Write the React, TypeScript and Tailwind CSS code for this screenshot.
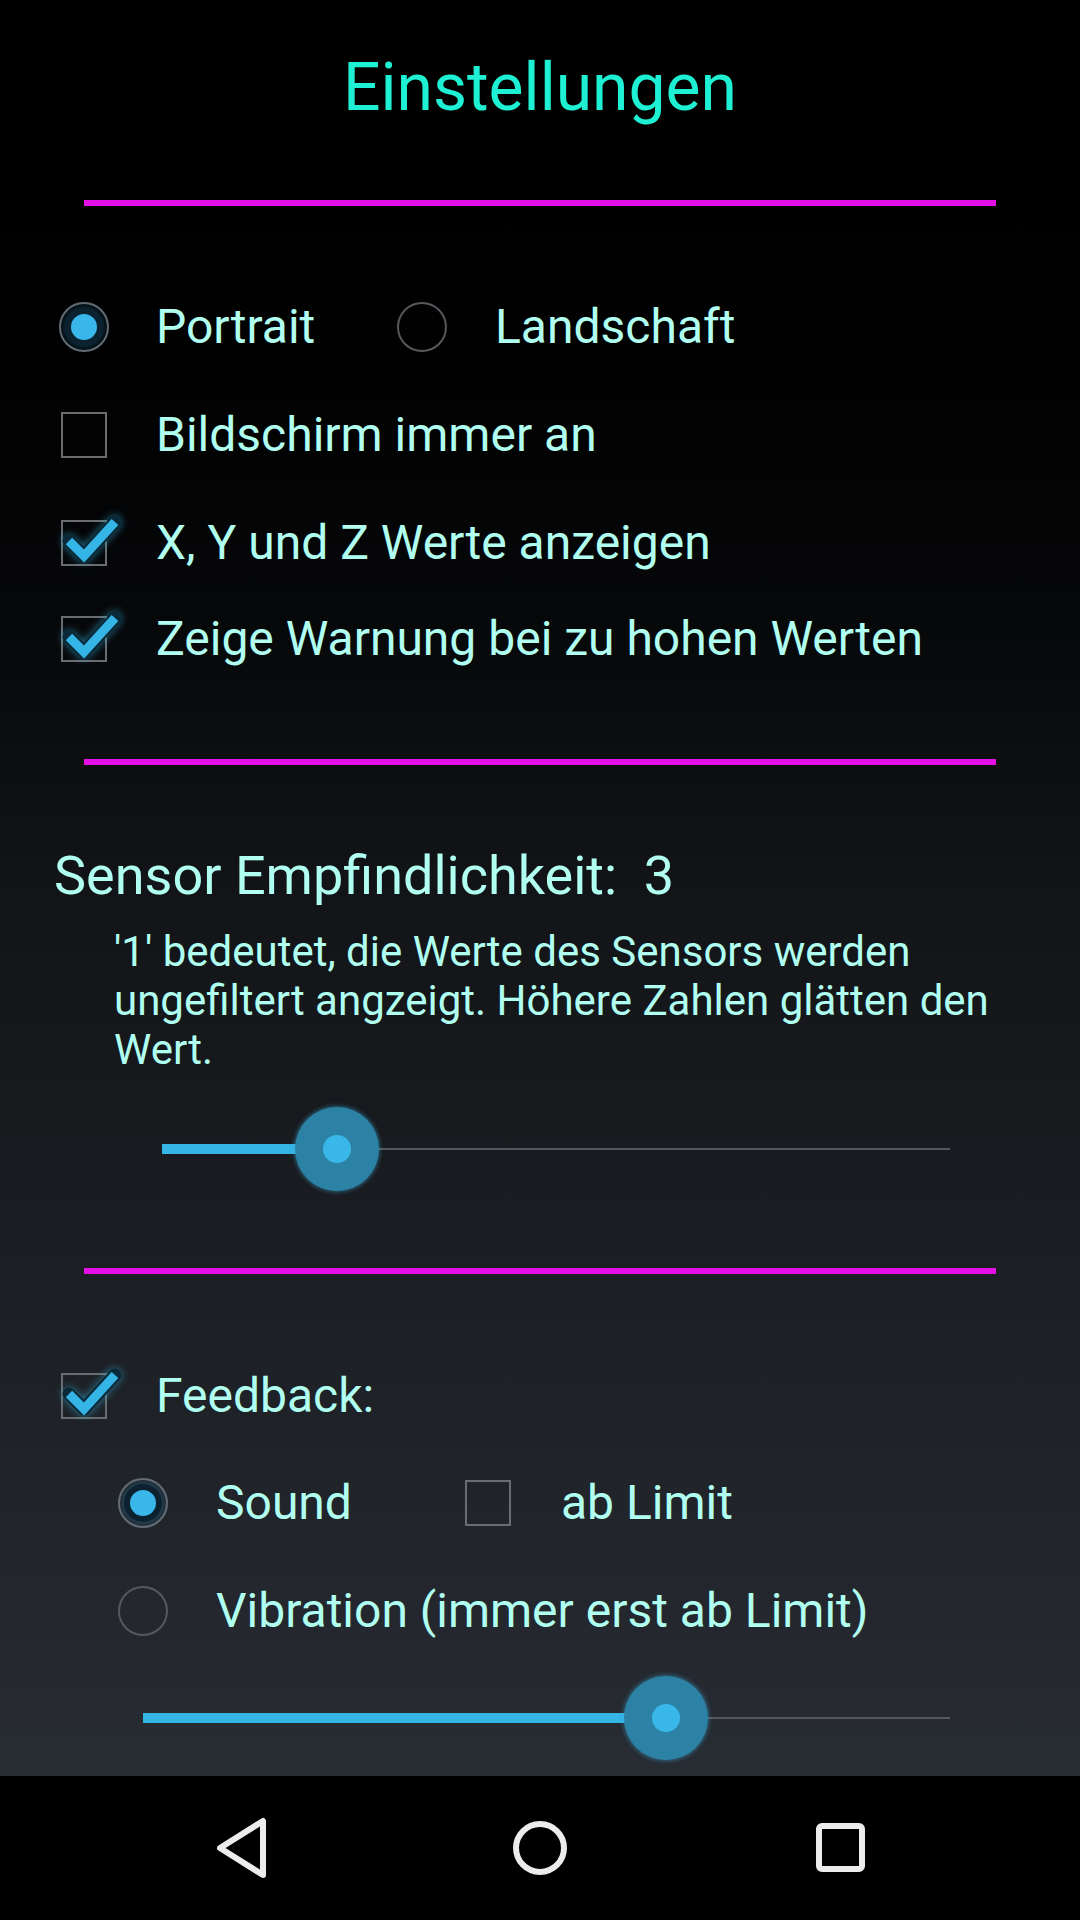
import React from "react";

const TEXT = "text-[#b0fff1]";

function RadioChecked() {
  return (
    <div className="w-[50px] h-[50px] rounded-full border-2 border-[#686b6f] flex items-center justify-center shrink-0">
      <div className="w-[38px] h-[38px] rounded-full bg-[#0d2230] flex items-center justify-center shadow-[0_0_6px_2px_rgba(40,140,190,0.35)]">
        <div className="w-[30px] h-[30px] rounded-full bg-[#39b6ea] border-2 border-[#0b2230]" />
      </div>
    </div>
  );
}

function RadioEmpty() {
  return <div className="w-[50px] h-[50px] rounded-full border-2 border-[#55585c] shrink-0" />;
}

function CheckboxEmpty() {
  return (
    <div className="w-[50px] h-[50px] flex items-center justify-center shrink-0">
      <div className="w-[46px] h-[46px] border-2 border-[#6a6c6f]" />
    </div>
  );
}

function CheckboxChecked() {
  return (
    <div className="w-[50px] h-[50px] flex items-center justify-center shrink-0">
      <div className="w-[46px] h-[46px] border-2 border-[#6a6c6f] relative">
        <svg
          className="absolute left-[-2px] top-[-2px] overflow-visible"
          width="60"
          height="46"
          viewBox="0 0 60 46"
          style={{ filter: "drop-shadow(0 0 4px rgba(51,181,229,0.6))" }}
        >
          <path
            d="M8 21 L23 36 L54 2"
            fill="none"
            stroke="#0a2a3a"
            strokeWidth="13"
            strokeLinecap="round"
            strokeLinejoin="round"
          />
          <path
            d="M8 21 L23 36 L54 2"
            fill="none"
            stroke="#35b4e6"
            strokeWidth="9"
            strokeLinecap="butt"
            strokeLinejoin="miter"
          />
        </svg>
      </div>
    </div>
  );
}

function Label({ children }: { children: React.ReactNode }) {
  return <span className={`text-[48px] leading-none whitespace-nowrap ${TEXT}`}>{children}</span>;
}

function Divider({ mt }: { mt: string }) {
  return <div className={`${mt} mx-[84px] h-[6px] bg-[#e30fe6]`} />;
}

function Slider({ ml, width, value }: { ml: string; width: string; value: number }) {
  return (
    <div className={`${ml} ${width} h-[90px] relative flex items-center`}>
      <div className="w-full h-[2px] bg-[#54575c]" />
      <div className="absolute left-0 top-[40px] h-[10px] bg-[#35b5e6]" style={{ width: value }} />
      <div
        className="absolute top-[3px] w-[84px] h-[84px] rounded-full bg-[#2c82a4] shadow-[0_0_4px_1px_rgba(60,170,220,0.5)] flex items-center justify-center"
        style={{ left: value - 42 }}
      >
        <div className="w-[28px] h-[28px] rounded-full bg-[#39b7e8]" />
      </div>
    </div>
  );
}

export default function App() {
  return (
    <div className="w-[1080px] h-[1920px] flex flex-col font-[Roboto,sans-serif] overflow-hidden">
      <div className="h-[1776px] flex flex-col bg-gradient-to-b from-[#000000] via-[#121417] to-[#282c33]">
        <div className="h-[176px] flex items-center justify-center">
          <span className="text-[66px] leading-none text-[#1ef1d3]">Einstellungen</span>
        </div>
        <Divider mt="mt-[24px]" />

        <div className="mt-[77px] h-[88px] flex items-center pl-[59px]">
          <div className="w-[338px] flex items-center gap-[47px]">
            <RadioChecked />
            <Label>Portrait</Label>
          </div>
          <div className="flex items-center gap-[48px]">
            <RadioEmpty />
            <Label>Landschaft</Label>
          </div>
        </div>

        <div className="mt-[20px] h-[88px] flex items-center pl-[59px] gap-[47px]">
          <CheckboxEmpty />
          <Label>Bildschirm immer an</Label>
        </div>
        <div className="mt-[20px] h-[88px] flex items-center pl-[59px] gap-[47px]">
          <CheckboxChecked />
          <Label>X, Y und Z Werte anzeigen</Label>
        </div>
        <div className="mt-[8px] h-[88px] flex items-center pl-[59px] gap-[47px]">
          <CheckboxChecked />
          <Label>Zeige Warnung bei zu hohen Werten</Label>
        </div>

        <Divider mt="mt-[76px]" />

        <div className="mt-[79px] h-[64px] flex items-center pl-[54px]">
          <span className={`text-[54px] leading-none whitespace-pre ${TEXT}`}>Sensor Empfindlichkeit:  3</span>
        </div>
        <div className={`mt-[19px] pl-[114px] text-[42px] leading-[49px] ${TEXT}`}>
          <div className="whitespace-nowrap">'1' bedeutet, die Werte des Sensors werden</div>
          <div className="whitespace-nowrap">ungefiltert angzeigt. Höhere Zahlen glätten den</div>
          <div className="whitespace-nowrap">Wert.</div>
        </div>

        <Slider ml="mt-[30px] ml-[162px]" width="w-[788px]" value={175} />

        <Divider mt="mt-[74px]" />

        <div className="mt-[78px] h-[88px] flex items-center pl-[59px] gap-[47px]">
          <CheckboxChecked />
          <Label>Feedback:</Label>
        </div>

        <div className="mt-[19px] h-[88px] flex items-center pl-[118px]">
          <div className="w-[345px] flex items-center gap-[48px]">
            <RadioChecked />
            <Label>Sound</Label>
          </div>
          <div className="flex items-center gap-[48px]">
            <CheckboxEmpty />
            <Label>ab Limit</Label>
          </div>
        </div>

        <div className="mt-[20px] h-[88px] flex items-center pl-[118px] gap-[48px]">
          <RadioEmpty />
          <Label>Vibration (immer erst ab Limit)</Label>
        </div>

        <Slider ml="mt-[18px] ml-[143px]" width="w-[807px]" value={523} />
      </div>

      <div className="h-[144px] bg-black flex items-center justify-center">
        <div className="w-[300px] flex justify-center">
          <svg width="60" height="64" viewBox="0 0 60 64">
            <path
              d="M53 5 L53 59 L10 32 Z"
              fill="none"
              stroke="#ececec"
              strokeWidth="6"
              strokeLinejoin="round"
            />
          </svg>
        </div>
        <div className="w-[300px] flex justify-center">
          <svg width="60" height="64" viewBox="0 0 60 64">
            <circle cx="30" cy="32" r="24" fill="none" stroke="#ececec" strokeWidth="6" />
          </svg>
        </div>
        <div className="w-[300px] flex justify-center">
          <svg width="60" height="64" viewBox="0 0 60 64">
            <rect x="9" y="10" width="43" height="43" rx="3" fill="none" stroke="#ececec" strokeWidth="6" />
          </svg>
        </div>
      </div>
    </div>
  );
}
